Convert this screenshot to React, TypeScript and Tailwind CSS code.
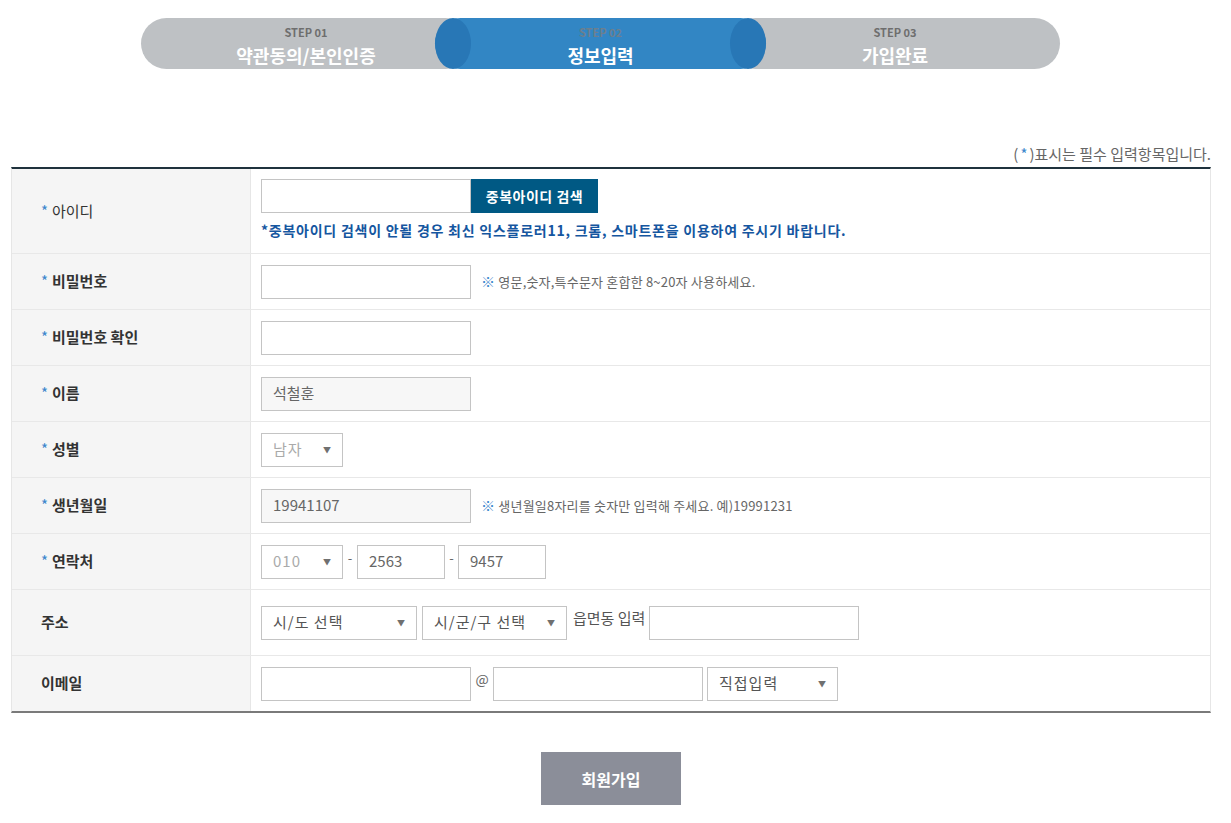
import React from "react";

const font = { fontFamily: '"Noto Sans CJK KR", "Noto Sans", sans-serif' };

function Arrow() {
  return <span className="text-[8px] leading-none text-[#707070]">▼</span>;
}

function Select({ w, text, muted }: { w: string; text: string; muted?: boolean }) {
  return (
    <div
      className={`${w} h-[34px] border border-[#c4c4c4] bg-white flex items-center justify-between pl-[11px] pr-[10px] text-[15px] tracking-[1px] ${
        muted ? "text-[#aaa]" : "text-[#555]"
      }`}
    >
      <span>{text}</span>
      <Arrow />
    </div>
  );
}

function Input({ w, value, disabled }: { w: string; value?: string; disabled?: boolean }) {
  return (
    <div
      className={`${w} h-[34px] border border-[#c4c4c4] flex items-center pl-[11px] text-[15px] text-[#666] ${
        disabled ? "bg-[#f7f7f7]" : "bg-white"
      }`}
    >
      {value}
    </div>
  );
}

function Label({ text, req, light }: { text: string; req?: boolean; light?: boolean }) {
  return (
    <div className="w-[239px] shrink-0 bg-[#f5f5f5] border-r border-[#e6e6e6] flex items-center pl-[29px] text-[15px] text-[#333]">
      {req ? <span className="text-[#3b86cc] mr-[4px] text-[15px]">*</span> : null}
      <span className={light ? "font-normal" : "font-bold"}>{text}</span>
    </div>
  );
}

function Row({ h, children, last }: { h: string; children: React.ReactNode; last?: boolean }) {
  return (
    <div className={`flex ${h} ${last ? "" : "border-b border-[#e8e8e8]"}`}>{children}</div>
  );
}

function Note({ children }: { children: React.ReactNode }) {
  return (
    <span className="ml-[10px] text-[13px] text-[#666] tracking-[0.2px]">
      <span className="text-[#3b86cc] text-[14px]">※</span> {children}
    </span>
  );
}

export default function App() {
  return (
    <div className="w-[1231px] h-[823px] bg-white" style={font}>
      {/* steps */}
      <div className="pt-[18px] pl-[141px] flex">
        <div className="relative z-0 w-[330px] h-[51px] rounded-full bg-[#bec1c4] flex flex-col items-center pt-[7px]">
          <div className="text-[11px] font-bold text-[#6e6e6e] leading-[14px]">STEP 01</div>
          <div className="mt-[5px] text-[18px] font-bold text-white leading-[22px]">약관동의/본인인증</div>
        </div>
        <div className="relative z-10 -ml-[36px] w-[331px] h-[51px] rounded-full bg-[#3286c4] flex flex-col items-center pt-[7px]">
          <div className="absolute left-0 top-0 w-[36px] h-[51px] rounded-[50%] bg-[#2877b6]" />
          <div className="absolute right-0 top-0 w-[36px] h-[51px] rounded-[50%] bg-[#2877b6]" />
          <div className="relative text-[11px] font-bold text-[#6c7f8e] leading-[14px]">STEP 02</div>
          <div className="relative mt-[5px] text-[18px] font-bold text-white leading-[22px]">정보입력</div>
        </div>
        <div className="relative z-0 -ml-[36px] w-[330px] h-[51px] rounded-full bg-[#bec1c4] flex flex-col items-center pt-[7px]">
          <div className="text-[11px] font-bold text-[#6e6e6e] leading-[14px]">STEP 03</div>
          <div className="mt-[5px] text-[18px] font-bold text-white leading-[22px]">가입완료</div>
        </div>
      </div>

      {/* note */}
      <div className="ml-[11px] w-[1200px] mt-[75px] text-right text-[15px] text-[#666] leading-[19px]">
        (<span className="text-[#3b86cc] mx-[2px]">*</span>)표시는 필수 입력항목입니다.
      </div>

      {/* table */}
      <div className="ml-[11px] mt-[4px] w-[1200px] border-t-2 border-t-[#1f323d] border-b-2 border-b-[#7a7a7a] border-l border-l-[#e6e6e6] border-r border-r-[#e6e6e6]">
        <Row h="h-[85px]">
          <Label text="아이디" req light />
          <div className="pl-[10px] pt-[10px] flex flex-col">
            <div className="flex">
              <Input w="w-[210px]" />
              <div className="w-[127px] h-[34px] bg-[#005984] text-white text-[14px] tracking-[0.5px] font-bold flex items-center justify-center">
                중복아이디 검색
              </div>
            </div>
            <div className="mt-[7px] text-[14px] font-bold text-[#1556a0] tracking-[0.75px]">
              *중복아이디 검색이 안될 경우 최신 익스플로러11, 크롬, 스마트폰을 이용하여 주시기 바랍니다.
            </div>
          </div>
        </Row>
        <Row h="h-[56px]">
          <Label text="비밀번호" req />
          <div className="pl-[10px] flex items-center">
            <Input w="w-[210px]" />
            <Note>영문,숫자,특수문자 혼합한 8~20자 사용하세요.</Note>
          </div>
        </Row>
        <Row h="h-[56px]">
          <Label text="비밀번호 확인" req />
          <div className="pl-[10px] flex items-center">
            <Input w="w-[210px]" />
          </div>
        </Row>
        <Row h="h-[56px]">
          <Label text="이름" req />
          <div className="pl-[10px] flex items-center">
            <Input w="w-[210px]" value="석철훈" disabled />
          </div>
        </Row>
        <Row h="h-[56px]">
          <Label text="성별" req />
          <div className="pl-[10px] flex items-center">
            <Select w="w-[82px]" text="남자" muted />
          </div>
        </Row>
        <Row h="h-[56px]">
          <Label text="생년월일" req />
          <div className="pl-[10px] flex items-center">
            <Input w="w-[210px]" value="19941107" disabled />
            <Note>생년월일8자리를 숫자만 입력해 주세요. 예)19991231</Note>
          </div>
        </Row>
        <Row h="h-[56px]">
          <Label text="연락처" req />
          <div className="pl-[10px] flex items-center">
            <Select w="w-[82px]" text="010" muted />
            <span className="w-[14px] text-center text-[13px] text-[#666] -mt-[8px]">-</span>
            <Input w="w-[88px]" value="2563" />
            <span className="w-[13px] text-center text-[13px] text-[#666] -mt-[8px]">-</span>
            <Input w="w-[88px]" value="9457" />
          </div>
        </Row>
        <Row h="h-[66px]">
          <Label text="주소" />
          <div className="pl-[10px] flex items-center">
            <Select w="w-[156px]" text="시/도 선택" />
            <div className="ml-[5px]">
              <Select w="w-[145px]" text="시/군/구 선택" />
            </div>
            <span className="ml-[6px] mr-[4px] text-[15px] text-[#555] -mt-[8px]">읍면동 입력</span>
            <Input w="w-[210px]" />
          </div>
        </Row>
        <Row h="h-[55px]" last>
          <Label text="이메일" />
          <div className="pl-[10px] flex items-center">
            <Input w="w-[210px]" />
            <span className="w-[22px] text-center text-[14px] text-[#666] -mt-[8px]">@</span>
            <Input w="w-[210px]" />
            <div className="ml-[4px]">
              <Select w="w-[131px]" text="직접입력" />
            </div>
          </div>
        </Row>
      </div>

      {/* submit */}
      <div className="flex mt-[39px] ml-[541px]">
        <div className="w-[140px] h-[53px] bg-[#8b8e99] text-white text-[16px] font-bold flex items-center justify-center">
          회원가입
        </div>
      </div>
    </div>
  );
}
